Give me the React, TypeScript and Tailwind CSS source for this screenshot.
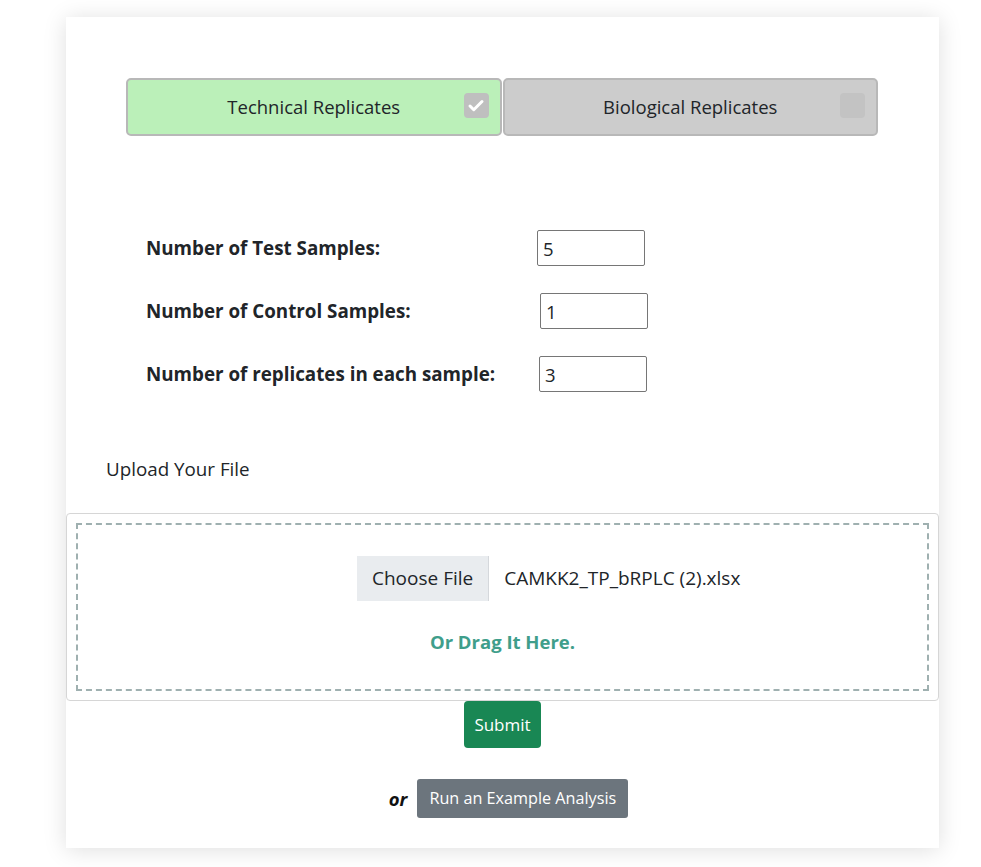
import { Check } from "lucide-react"

const Toggle = ({
  label,
  active,
}: {
  label: string
  active?: boolean
}) => {
  return (
    <div
      className={`relative flex-1 h-[58px] flex items-center justify-center rounded-[5px] border-2 border-[#b8b8b8] ${
        active ? "bg-[#bbf0b9]" : "bg-[#cccccc]"
      }`}
    >
      <span className="text-[18.5px]">{label}</span>
      <span
        className={`absolute right-[11px] top-[13px] w-[25px] h-[25px] rounded-[4px] flex items-center justify-center ${
          active ? "bg-[#bfbfbf]" : "bg-[#c3c3c3]"
        }`}
      >
        {active && <Check size={18} strokeWidth={4} color="#ffffff" />}
      </span>
    </div>
  )
}

const Field = ({
  label,
  value,
  shift,
}: {
  label: string
  value: string
  shift: string
}) => {
  return (
    <div className="grid grid-cols-[391px_auto] items-center h-[36px]">
      <label className="font-bold text-[18.8px]">{label}</label>
      <input
        type="text"
        defaultValue={value}
        className={`w-[108px] h-[36px] border border-[#767676] rounded-[2px] px-[5px] text-[18.5px] outline-none ${shift}`}
      />
    </div>
  )
}

const App = () => {
  return (
    <div
      className="min-h-[867px] bg-white text-[#212529]"
      style={{ fontFamily: "'Open Sans', 'Noto Sans', sans-serif" }}
    >
      <div className="pt-[17px] pl-[66px]">
        <div className="w-[873px] bg-white shadow-[0_2px_22px_rgba(0,0,0,0.13)] pb-[30px]">
          <div className="flex gap-px pt-[61px] pl-[60px] pr-[61px]">
            <Toggle label="Technical Replicates" active />
            <Toggle label="Biological Replicates" />
          </div>

          <div className="flex flex-col gap-[27px] mt-[94px] pl-[80px]">
            <Field label="Number of Test Samples:" value="5" shift="ml-0" />
            <Field
              label="Number of Control Samples:"
              value="1"
              shift="ml-[3px]"
            />
            <Field
              label="Number of replicates in each sample:"
              value="3"
              shift="ml-[2px]"
            />
          </div>

          <p className="mt-[64px] pl-[40px] text-[18.8px] leading-[26px]">
            Upload Your File
          </p>

          <div className="mt-[31px] border border-[#d6d6d6] rounded-[4px] p-[9px]">
            <div className="border-2 border-dashed border-[#9fb0b0] h-[168px] flex flex-col items-center pt-[31px]">
              <div className="w-[291px] flex items-center h-[45px] whitespace-nowrap">
                <span className="h-[45px] px-[15px] flex items-center bg-[#e9ecef] border-r border-[#d5d8dc] text-[19px]">
                  Choose File
                </span>
                <span className="ml-[15px] text-[19px]">
                  CAMKK2_TP_bRPLC (2).xlsx
                </span>
              </div>
              <p className="mt-[27px] font-bold text-[18.5px] text-[#3f9e8b]">
                Or Drag It Here.
              </p>
            </div>
          </div>

          <div className="flex justify-center">
            <button className="h-[47px] w-[77px] bg-[#198754] text-white text-[17px] rounded-[4px]">
              Submit
            </button>
          </div>

          <div className="flex justify-center items-center gap-[10px] mt-[31px] pl-[12px]">
            <span className="font-bold italic text-[18.5px] text-[#111]">or</span>
            <button className="h-[39px] px-[12px] bg-[#6c757d] text-white text-[16.2px] rounded-[3px]">
              Run an Example Analysis
            </button>
          </div>
        </div>
      </div>
    </div>
  )
}

export default App
